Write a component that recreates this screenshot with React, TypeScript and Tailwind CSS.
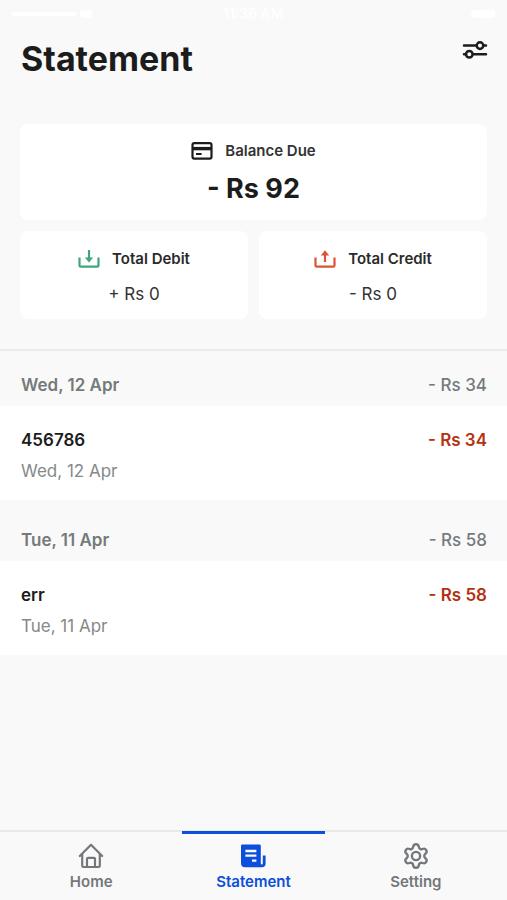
import React from 'react';

interface Entry {
  title: string;
  date: string;
  amount: string;
}

interface Group {
  day: string;
  total: string;
  entries: Entry[];
}

const GROUPS: Group[] = [
  {
    day: 'Wed, 12 Apr',
    total: '- Rs 34',
    entries: [{ title: '456786', date: 'Wed, 12 Apr', amount: '- Rs 34' }],
  },
  {
    day: 'Tue, 11 Apr',
    total: '- Rs 58',
    entries: [{ title: 'err', date: 'Tue, 11 Apr', amount: '- Rs 58' }],
  },
];

const FilterIcon = () => (
  <svg width="26" height="20" viewBox="0 0 26 20" fill="none" stroke="currentColor" strokeWidth="2.5" strokeLinecap="round">
    <path d="M2 5.6H14.4M21.6 5.6H24M2 14.2H4M11.4 14.2H24" />
    <circle cx="18" cy="5.6" r="3.3" />
    <circle cx="7.3" cy="14.2" r="3.3" />
  </svg>
);

const CardIcon = () => (
  <svg width="22" height="18" viewBox="0 0 22 18" fill="none" stroke="currentColor">
    <rect x="1.5" y="1.2" width="19" height="15.4" rx="1.8" strokeWidth="2.2" />
    <path d="M1.5 6.6H20.5" strokeWidth="3.4" />
    <path d="M5 12H10.6" strokeWidth="2" />
  </svg>
);

const DebitIcon = () => (
  <svg width="22" height="18" viewBox="0 0 22 18" fill="none">
    <path d="M1.5 7.6V15.4A1.2 1.2 0 0 0 2.7 16.6H19.3A1.2 1.2 0 0 0 20.5 15.4V7.6" stroke="currentColor" strokeWidth="2.2" />
    <path d="M11 0V9" stroke="currentColor" strokeWidth="2.2" />
    <path d="M6.8 7.6H15.2L11 12.6Z" fill="currentColor" />
  </svg>
);

const CreditIcon = () => (
  <svg width="22" height="18" viewBox="0 0 22 18" fill="none">
    <path d="M1.5 7.6V15.4A1.2 1.2 0 0 0 2.7 16.6H19.3A1.2 1.2 0 0 0 20.5 15.4V7.6" stroke="currentColor" strokeWidth="2.2" />
    <path d="M11 4V12" stroke="currentColor" strokeWidth="2.2" />
    <path d="M6.8 5.4H15.2L11 0.2Z" fill="currentColor" />
  </svg>
);

const HomeIcon = () => (
  <svg width="26" height="26" viewBox="0 0 26 26" fill="none" stroke="currentColor" strokeWidth="2.2" strokeLinecap="round" strokeLinejoin="round">
    <path d="M1.8 13L13 1.8L24.2 13" />
    <path d="M4.2 11V22.6A1.4 1.4 0 0 0 5.6 24H20.4A1.4 1.4 0 0 0 21.8 22.6V11" />
    <path d="M9 24V15.8A1 1 0 0 1 10 14.8H16A1 1 0 0 1 17 15.8V24" />
  </svg>
);

const StatementIcon = () => (
  <svg width="26" height="26" viewBox="0 0 26 26" fill="none">
    <path
      d="M2.4 1.6H19.4A1.4 1.4 0 0 1 20.8 3V20.6A1 1 0 0 0 22.8 20.6V12.4H25.6V20.4A3.8 3.8 0 0 1 21.8 24.2H5A4 4 0 0 1 1 20.2V3A1.4 1.4 0 0 1 2.4 1.6Z"
      fill="currentColor"
    />
    <path d="M5.4 8H16.4M5.4 12.6H16.4M12 17.6H16.4" stroke="#f9f9f9" strokeWidth="2.4" />
  </svg>
);

const SettingIcon = () => (
  <svg width="26" height="26" viewBox="1 1 22 22" fill="none" stroke="currentColor" strokeWidth="2" strokeLinecap="round" strokeLinejoin="round">
    <path d="M9.671 4.136a2.34 2.34 0 0 1 4.659 0 2.34 2.34 0 0 0 3.319 1.915 2.34 2.34 0 0 1 2.33 4.033 2.34 2.34 0 0 0 0 3.831 2.34 2.34 0 0 1-2.33 4.033 2.34 2.34 0 0 0-3.319 1.915 2.34 2.34 0 0 1-4.659 0 2.34 2.34 0 0 0-3.32-1.915 2.34 2.34 0 0 1-2.33-4.033 2.34 2.34 0 0 0 0-3.831A2.34 2.34 0 0 1 6.35 6.051a2.34 2.34 0 0 0 3.319-1.915" />
    <circle cx="12" cy="12" r="3.5" />
  </svg>
);

const StatusBar = () => (
  <div className="flex h-7 items-center justify-between px-3 text-sm text-white" aria-hidden="true">
    <div className="flex w-20 items-center gap-1">
      <span className="h-1 flex-1 rounded-full bg-white"></span>
      <span className="h-2 w-3 rounded-full bg-white"></span>
    </div>
    <span className="font-medium">11:36 AM</span>
    <div className="flex w-20 justify-end">
      <span className="h-2 w-6 rounded bg-white"></span>
    </div>
  </div>
);

interface TotalCardProps {
  label: string;
  value: string;
  icon: React.ReactNode;
}

const TotalCard: React.FC<TotalCardProps> = ({ label, value, icon }) => (
  <div className="flex flex-1 flex-col items-center gap-[11px] rounded-lg bg-white pt-4 pb-[13px]">
    <div className="flex h-6 items-center gap-3">
      {icon}
      <h2 className="text-[15px] font-semibold text-[#2a2a2a]">{label}</h2>
    </div>
    <p className="text-[17px] leading-6 text-[#333333]">{value}</p>
  </div>
);

const TABS = [
  { label: 'Home', icon: <HomeIcon />, active: false },
  { label: 'Statement', icon: <StatementIcon />, active: true },
  { label: 'Setting', icon: <SettingIcon />, active: false },
];

const App: React.FC = () => {
  return (
    <div className="flex min-h-screen flex-col bg-[#f9f9f9] font-['Inter',sans-serif] text-[#1c1c1c]">
      <StatusBar />

      <header className="flex items-start justify-between pt-[11px] pr-5 pl-[21px]">
        <h1 className="text-[34px] leading-10 font-bold">Statement</h1>
        <button type="button" aria-label="Filter" className="-mr-1 pt-px pr-[3px]">
          <FilterIcon />
        </button>
      </header>

      <main className="flex-1 pt-[45px]">
        <section className="flex flex-col gap-[11px] border-b-2 border-[#ebebeb] px-5 pb-[30px]">
          <div className="flex flex-col items-center rounded-lg bg-white pt-[15px] pb-[13px]">
            <div className="flex h-6 items-center gap-3">
              <CardIcon />
              <h2 className="text-[15px] font-semibold text-[#333333]">Balance Due</h2>
            </div>
            <p className="pt-2 text-[27px] leading-9 font-bold">- Rs 92</p>
          </div>
          <div className="flex gap-[11px]">
            <TotalCard label="Total Debit" value="+ Rs 0" icon={<span className="text-[#41a57c]"><DebitIcon /></span>} />
            <TotalCard label="Total Credit" value="- Rs 0" icon={<span className="text-[#dc5433]"><CreditIcon /></span>} />
          </div>
        </section>

        <div className="flex flex-col gap-[6px]">
          {GROUPS.map((group) => (
            <section key={group.day}>
              <div className="flex justify-between pt-[22px] pr-5 pb-[9px] pl-[21px] text-[17px] leading-6 font-semibold text-[#757a7a]">
                <h2>{group.day}</h2>
                <span className="font-medium">{group.total}</span>
              </div>
              <ul>
                {group.entries.map((entry) => (
                  <li key={entry.title} className="flex items-start justify-between bg-white pt-[22px] pr-5 pb-[17px] pl-[21px] text-[17px] leading-6">
                    <div className="flex flex-col gap-[7px]">
                      <h3 className="font-semibold">{entry.title}</h3>
                      <p className="text-[#858989]">{entry.date}</p>
                    </div>
                    <span className="font-semibold text-[#b5310f]">{entry.amount}</span>
                  </li>
                ))}
              </ul>
            </section>
          ))}
        </div>
      </main>

      <nav className="flex border-t-2 border-[#e8eaea] px-[10px]">
        {TABS.map((tab) => (
          <a
            key={tab.label}
            href="#"
            aria-current={tab.active ? 'page' : undefined}
            className={`relative flex flex-1 flex-col items-center gap-[3px] pt-[11px] pb-2 text-[15px] leading-5 font-semibold ${tab.active ? 'text-[#0b4fdc]' : 'text-[#74787a]'}`}
          >
            {tab.active && <span className="absolute inset-x-[10px] -top-px h-[3px] bg-[#0b4fdc]"></span>}
            {tab.icon}
            <span>{tab.label}</span>
          </a>
        ))}
      </nav>
    </div>
  );
};

export default App;
